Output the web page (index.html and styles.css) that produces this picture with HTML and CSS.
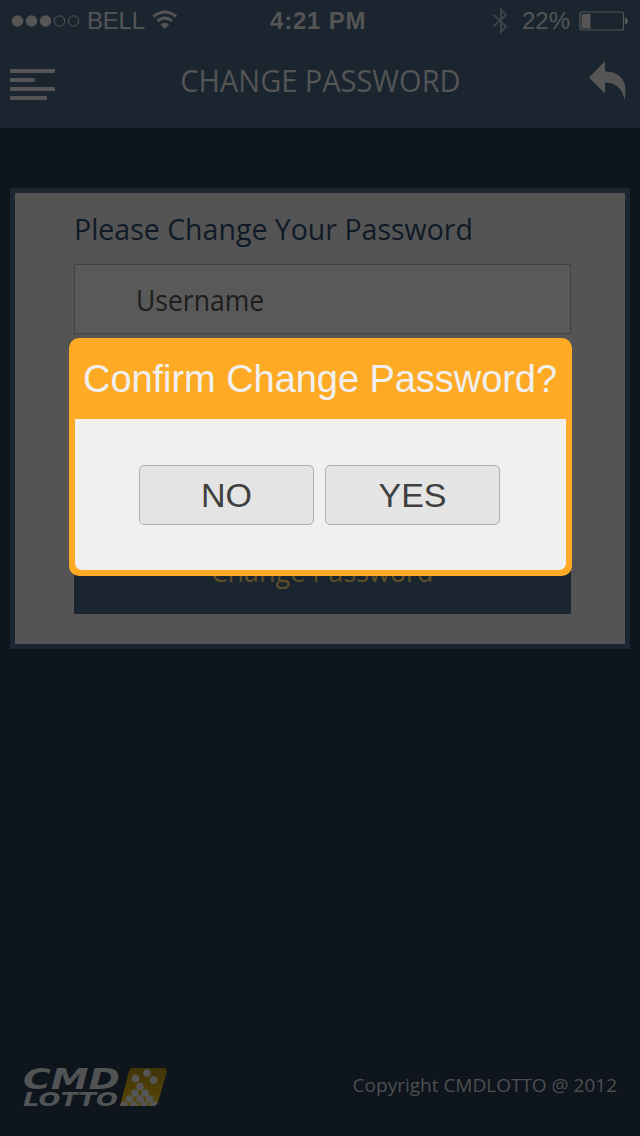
FILE: index.html
```
<!DOCTYPE html>
<html lang="en">
<head>
<meta charset="utf-8">
<title>Change Password</title>
<link rel="stylesheet" href="styles.css">
</head>
<body>
<div class="screen">
  <header class="top">
    <div class="status">
      <div class="carrier">
        <svg class="signal" width="69" height="14" viewBox="0 0 69 14"><g fill="#555"><circle cx="6.5" cy="7" r="5.8"/><circle cx="20.5" cy="7" r="5.8"/><circle cx="34.5" cy="7" r="5.8"/></g><g fill="none" stroke="#555"><circle cx="48.5" cy="7" r="5.2"/><circle cx="62.5" cy="7" r="5.2"/></g></svg>
        <span class="bell">BELL</span>
        <svg class="wifi" width="26" height="20" viewBox="0 0 26 20"><g fill="none" stroke="#555" stroke-width="3"><path d="M1.500 6.500Q13 -2.500 24 6.500"/><path d="M5.500 11Q13 5 20 11"/></g><path d="M8.500 14.500Q13 11 17 14.500L12.800 19z" fill="#555"/></svg>
      </div>
      <span class="clock">4:21 PM</span>
      <div class="power">
        <svg width="17" height="28" viewBox="0 0 17 28"><path d="M1.500 7.500L14 19.500L9 25V2.500L14 8L1.500 19.500" fill="none" stroke="#3b434b" stroke-width="1.900"/></svg>
        <span class="percent">22%</span>
        <svg class="battery" width="50" height="20" viewBox="0 0 50 20"><rect x=".8" y="1" width="43.700" height="18" rx="2" fill="none" stroke="#555" stroke-width="1.200"/><path d="M2.500 3h9v14.500h-9zM46 6.500Q49 7.500 49 10T46 13.500z" fill="#555"/></svg>
      </div>
    </div>
    <nav class="nav">
      <svg width="46" height="32" viewBox="0 0 46 32" fill="#555"><rect width="45" height="4" rx="1"/><rect y="9" width="25" height="4" rx="1"/><rect y="18" width="45" height="4" rx="1"/><rect y="27" width="37" height="4" rx="1"/></svg>
      <h1 class="title">CHANGE PASSWORD</h1>
      <svg width="38" height="40" viewBox="0 0 38 40"><path d="M0 16.500L16 0V10.500C29 10.500 36.500 18 36.500 29C36.500 33 36 36 35.500 39C34 30 29 21.500 16 21.500V32.500z" fill="#555"/></svg>
    </nav>
  </header>
  <main class="panel">
    <h2 class="heading">Please Change Your Password</h2>
    <div class="field"><span class="field-label">Username</span></div>
    <div class="submit"><span class="submit-label">Change Password</span></div>
  </main>
  <footer class="footer">
    <svg class="logo" width="146" height="42" viewBox="0 0 146 42">
      <defs><linearGradient id="gold" x1="0" y1="0" x2="0" y2="1"><stop offset="0" stop-color="#3f3308"/><stop offset="1" stop-color="#5b4908"/></linearGradient><clipPath id="tile"><path d="M109 2H140Q145 2 143.500 7L135 36Q134 40 130 40H97L106 5Q107 2 109 2z"/></clipPath></defs>
      <g class="logo-text" fill="#515354"><text x="0" y="22.500" font-size="28" textLength="97" lengthAdjust="spacingAndGlyphs">CMD</text><text x="0" y="40" font-size="20" textLength="95" lengthAdjust="spacingAndGlyphs">LOTTO</text></g>
      <g clip-path="url(#tile)"><path d="M96 0h50v42H96z" fill="url(#gold)"/><g fill="#555"><circle cx="124" cy="7" r="3.800"/><circle cx="112.500" cy="12.500" r="3.800"/><circle cx="130.500" cy="14" r="3.800"/><circle cx="117" cy="20.500" r="3.800"/><circle cx="112" cy="27" r="3.800"/><circle cx="122" cy="27" r="3.800"/><circle cx="106.500" cy="33" r="3.800"/><circle cx="117" cy="33" r="3.800"/><circle cx="126.500" cy="33" r="3.800"/><circle cx="101" cy="39" r="3.800"/><circle cx="111" cy="39" r="3.800"/><circle cx="121" cy="39" r="3.800"/><circle cx="131" cy="39" r="3.800"/></g></g>
    </svg>
    <span class="copyright">Copyright CMDLOTTO @ 2012</span>
  </footer>
  <section class="dialog">
    <h2 class="dialog-title">Confirm Change Password?</h2>
    <div class="dialog-body">
      <button class="choice">NO</button>
      <button class="choice">YES</button>
    </div>
  </section>
</div>
</body>
</html>
```
FILE: styles.css
```
* { box-sizing: border-box; }
body { margin: 0; }
.screen {
  position: relative;
  display: flex;
  flex-direction: column;
  width: 640px;
  height: 1136px;
  overflow: hidden;
  background: #0e151d;
  color: #555;
  font-family: "Open Sans", "Noto Sans", sans-serif;
  white-space: nowrap;
}
svg { display: block; flex: none; }
h1, h2 { margin: 0; font-weight: 400; }
.top { height: 128px; background: #1a2530; }
.status {
  display: grid;
  grid-template-columns: 270px 1fr 150px;
  height: 41px;
  font-family: "Liberation Sans", Arial, sans-serif;
  font-size: 24px;
  line-height: 41px;
}
.carrier { display: flex; align-items: center; padding-left: 11px; }
.bell { width: 65px; padding-left: 7px; letter-spacing: -0.2px; }
.wifi { margin: -2px 0 0 7px; }
.clock { font-weight: 700; letter-spacing: 0.8px; }
.power { display: flex; align-items: center; padding-left: 2px; }
.percent { width: 57px; padding-left: 13px; margin-right: 13px; }
.nav {
  display: flex;
  justify-content: space-between;
  height: 80px;
  padding: 20px 13px 0 10px;
}
.nav > svg:first-child { margin-top: 8px; }
.title { font-size: 30.5px; line-height: 39px; transform: scaleX(0.95); margin: 0 -10px 0 -14px; }
.panel {
  width: 620px;
  height: 461px;
  margin: 60px 10px 0;
  padding: 14px 54px 30px 59px;
  border: 5px solid #1a2632;
  background: #545454;
  display: flex;
  flex-direction: column;
}
.heading {
  height: 57px;
  color: #101a26;
  font-size: 30px;
  line-height: 44px;
  transform: scaleX(0.95);
  transform-origin: 0 0;
}
.field {
  width: 497px;
  height: 70px;
  padding-left: 61px;
  border: 1px solid #414141;
  background: #595959;
  color: #1d1d1d;
  font-size: 29px;
  line-height: 70px;
}
.field-label { display: inline-block; transform: scaleX(0.914); transform-origin: 0 0; }
.submit {
  width: 497px;
  height: 70px;
  margin-top: auto;
  background: #1a2530;
  color: #5e4f2b;
  font-size: 29px;
  line-height: 54px;
  text-align: center;
}
.submit-label { display: inline-block; transform: scaleX(0.928); }
.footer {
  display: flex;
  justify-content: space-between;
  align-items: center;
  margin-top: auto;
  padding: 0 23px 28px 23px;
}
.copyright { margin-top: -4px; font-size: 19px; line-height: 38px; color: #4d4f51; }
.logo { overflow: visible; }
.logo-text { font: italic 700 20px "DejaVu Sans", sans-serif; }
.dialog {
  position: absolute;
  left: 69px;
  top: 338px;
  width: 503px;
  height: 238px;
  padding: 0 6px 6px;
  border-radius: 10px;
  background: #ffaa25;
  font-family: "Liberation Sans", Arial, sans-serif;
}
.dialog-title { height: 81px; padding-left: 8px; color: #f0f0f0; font-size: 38px; line-height: 82px; letter-spacing: -0.05px; }
.dialog-body {
  display: flex;
  gap: 11px;
  height: 151px;
  padding: 46px 0 0 64px;
  border-radius: 0 0 7px 7px;
  background: #f0f0f0;
}
.choice {
  width: 175px;
  height: 60px;
  padding: 0;
  border: 1px solid #b0b0b0;
  border-radius: 5px;
  background: #e4e4e4;
  color: #404040;
  font: 34px/58px "Liberation Sans", Arial, sans-serif;
}
```
